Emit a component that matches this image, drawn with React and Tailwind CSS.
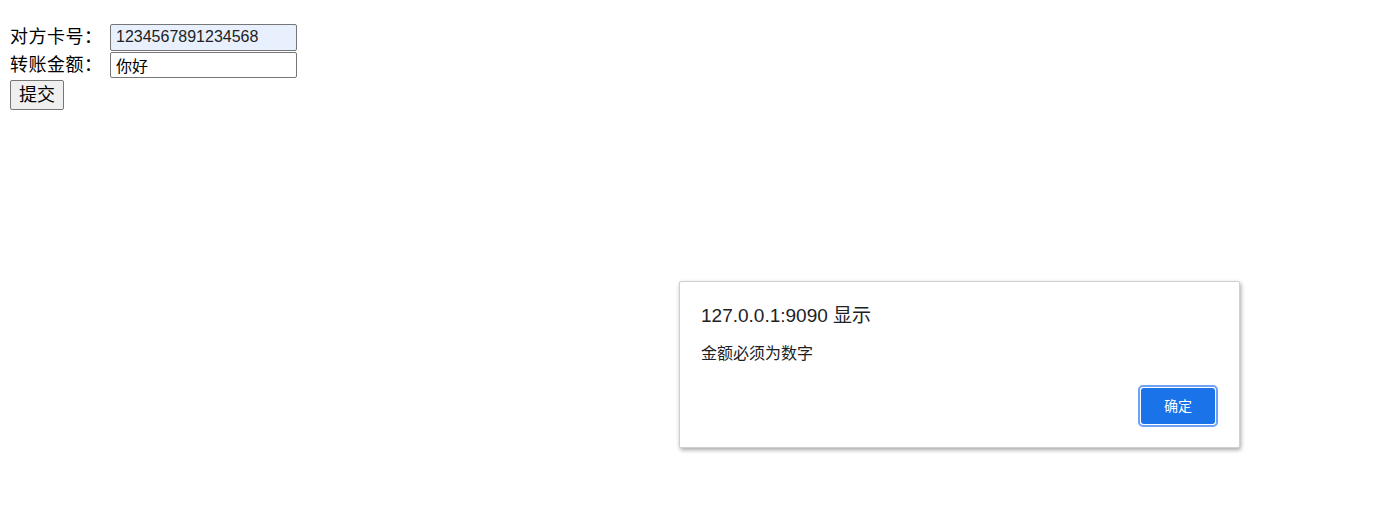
export default function App() {
  return (
    <main className="relative w-[1373px] h-[525px] bg-white text-black font-['Liberation_Sans','Noto_Sans_CJK_SC',sans-serif]">
      <div className="pt-[23px] pl-[10px] flex flex-col">
        <div className="flex items-center h-[28px]">
          <span className="w-[100px] text-[18px] leading-none tracking-[0.5px]">对方卡号：</span>
          <input
            readOnly
            value="1234567891234568"
            className="w-[187px] h-[27px] border border-[#767676] rounded-[2px] bg-[#e8f0fe] px-[5px] text-[16px] text-[#222] outline-none"
          />
        </div>
        <div className="flex items-center h-[28px]">
          <span className="w-[100px] text-[18px] leading-none tracking-[0.5px]">转账金额：</span>
          <input
            readOnly
            value="你好"
            className="w-[187px] h-[26px] border border-[#767676] rounded-[2px] bg-white px-[5px] text-[16px] outline-none"
          />
        </div>
        <div className="pt-[1px]">
          <button className="w-[54px] h-[30px] border border-[#767676] rounded-[2px] bg-[#efefef] text-[18px] leading-none">
            提交
          </button>
        </div>
      </div>

      {/* alert dialog */}
      <div className="absolute left-[679px] top-[281px] w-[561px] h-[167px] bg-white border border-[#d0d0d0] rounded-[2px] shadow-[1px_2px_4px_rgba(0,0,0,0.35)]">
        <div className="pl-[21px] pt-[21px] flex flex-col">
          <p className="text-[19px] leading-[26px] text-[#202124]">127.0.0.1:9090 显示</p>
          <p className="mt-[15px] text-[16px] leading-[20px] text-[#202124]">金额必须为数字</p>
        </div>
        <div className="absolute right-[21px] bottom-[20px] rounded-[5px] border-2 border-[#6fa2f5] p-[1px]">
          <button className="w-[74px] h-[36px] bg-[#1a73e8] text-white text-[14px] rounded-[3px]">确定</button>
        </div>
      </div>
    </main>
  )
}
